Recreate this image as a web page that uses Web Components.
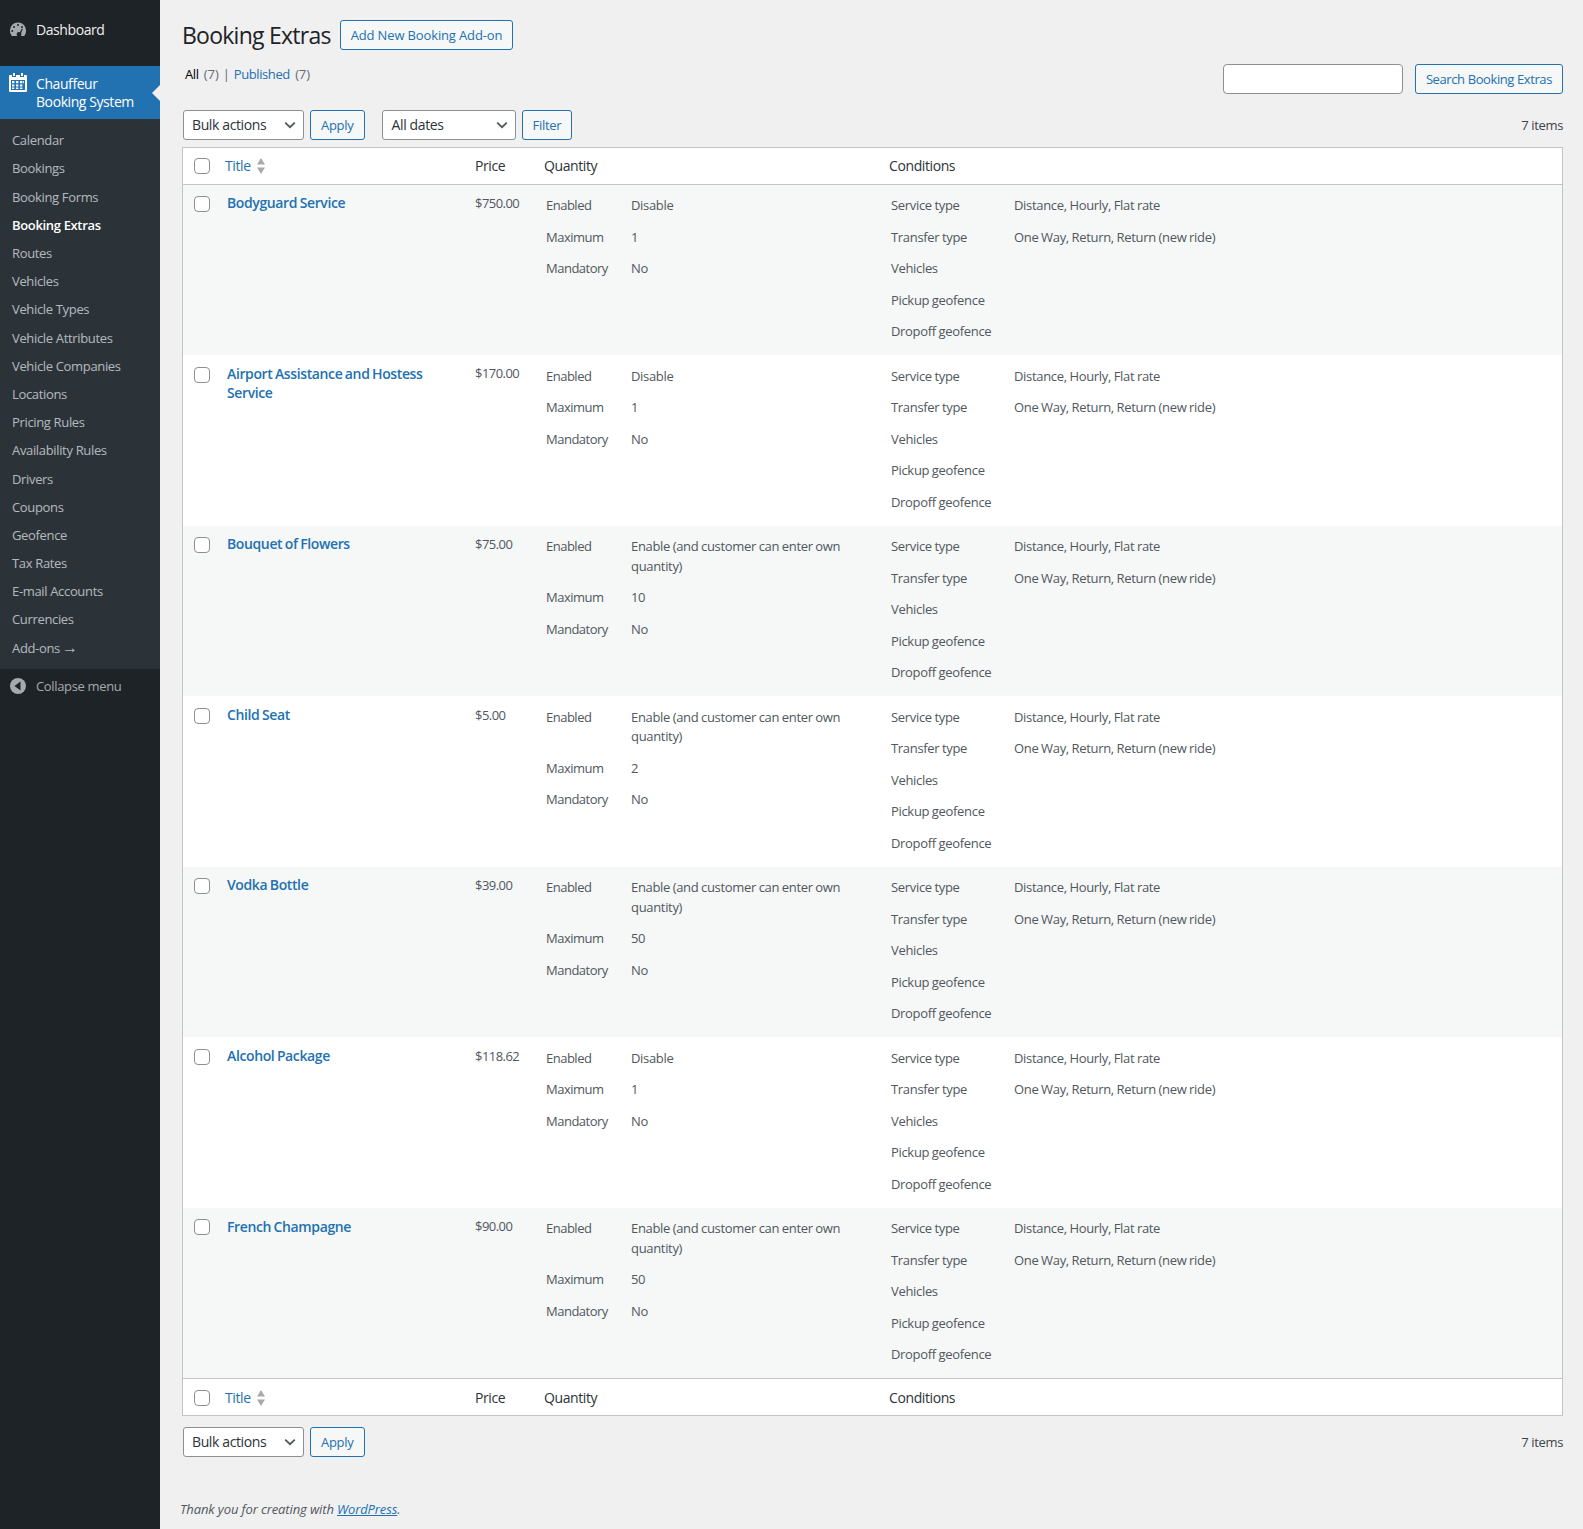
<!DOCTYPE html>
<html lang="en">
<head>
<meta charset="utf-8">
<title>Booking Extras</title>
<style>
  html, body { margin: 0; padding: 0; background: #f0f0f1; }
  body { font: 13px/1.4 "Open Sans", "Noto Sans", sans-serif; color: #3c434a; letter-spacing: -0.32px; word-spacing: -0.4px; }
</style>
</head>
<body>
<wp-admin></wp-admin>
<script>
class WpButton extends HTMLElement {
  connectedCallback() {
    const shadow = this.attachShadow({ mode: 'open' });
    shadow.innerHTML = `
      <style>
        :host { display: inline-flex; align-items: center; height: 30px; box-sizing: border-box;
          padding: 0 10px; border: 1px solid #2271b1; border-radius: 3px; background: #f6f7f7;
          color: #2271b1; font-size: 13px; white-space: nowrap; letter-spacing: var(--btn-spacing, -0.28px); word-spacing: 0; }
      </style>
      <slot></slot>`;
  }
}
customElements.define('wp-button', WpButton);

class WpSelect extends HTMLElement {
  connectedCallback() {
    const shadow = this.attachShadow({ mode: 'open' });
    shadow.innerHTML = `
      <style>
        :host { display: inline-flex; align-items: center; justify-content: space-between; height: 30px;
          box-sizing: border-box; padding: 0 7px 0 8px; border: 1px solid #8c8f94; border-radius: 3px;
          background: #fff; color: #2c3338; font-size: 14px; white-space: nowrap; letter-spacing: -0.38px; word-spacing: 0; }
        svg { display: block; }
      </style>
      <slot></slot>
      <svg width="12" height="12" viewBox="0 0 12 12"><path d="M1.2 3.6 6 8.2l4.8-4.6" fill="none" stroke="#50575e" stroke-width="1.8"/></svg>`;
  }
}
customElements.define('wp-select', WpSelect);

class WpCheck extends HTMLElement {
  connectedCallback() {
    const shadow = this.attachShadow({ mode: 'open' });
    shadow.innerHTML = `
      <style>
        :host { display: block; width: 16px; height: 16px; box-sizing: border-box; flex: none;
          border: 1px solid #8c8f94; border-radius: 4px; background: #fff; }
      </style>`;
  }
}
customElements.define('wp-check', WpCheck);

class WpSidebar extends HTMLElement {
  connectedCallback() {
    const shadow = this.attachShadow({ mode: 'open' });
    // Submenu entries of the plugin
    const items = ['Calendar', 'Bookings', 'Booking Forms', 'Booking Extras', 'Routes', 'Vehicles',
      'Vehicle Types', 'Vehicle Attributes', 'Vehicle Companies', 'Locations', 'Pricing Rules',
      'Availability Rules', 'Drivers', 'Coupons', 'Geofence', 'Tax Rates', 'E-mail Accounts',
      'Currencies', 'Add-ons <span class="arrow">→</span>'];
    const itemHTML = items.map(name =>
      `<a class="${name === 'Booking Extras' ? 'current' : ''}">${name}</a>`
    ).join('');
    shadow.innerHTML = `
      <style>
        :host { display: block; width: 160px; flex: none; background: #1d2327; font-size: 14px; letter-spacing: -0.42px; word-spacing: 0; }
        .top { display: flex; align-items: center; box-sizing: border-box; height: 34px; padding-top: 2px; margin: 12px 0 20px; color: #f0f0f1; }
        .ico { width: 36px; flex: none; display: flex; justify-content: center; }
        .ico svg { display: block; margin-left: -1px; }
        .active { position: relative; display: flex; box-sizing: border-box; height: 53px; background: #2271b1; color: #fff; padding: 9px 0 0; line-height: 18.2px; }
        .active .ico { align-items: flex-start; }
        .active::after { content: ""; position: absolute; right: 0; top: 50%; margin-top: -8px;
          border: 8px solid transparent; border-right-color: #f0f0f1; border-left-width: 0; }
        .sub { background: #2c3338; padding: 7.3px 0 6.7px; font-size: 13px; letter-spacing: -0.34px; }
        .sub a { display: block; height: 18.2px; padding: 5px 12px; line-height: 18.2px; color: rgba(240,246,252,.7); }
        .sub a.current { color: #fff; font-weight: 600; }
        .arrow { font-family: "Liberation Sans", sans-serif; font-size: 16px; line-height: 0; letter-spacing: 0; margin-left: -1px; }
        .collapse { display: flex; align-items: center; box-sizing: border-box; height: 34px; padding-top: 1px; color: #a7aaad; font-size: 13px; letter-spacing: -0.34px; }
      </style>
      <div class="top">
        <span class="ico"><svg width="20" height="20" viewBox="0 0 20 20"><path fill="#a7aaad" fill-rule="evenodd" d="M3.76 16A8.5 8.5 0 0 1 1.9 10.5a8.1 8.1 0 0 1 16.2 0c0 2.1-.7 4-1.86 5.5H12.7c.5-.4.8-1 .8-1.7 0-.5-.2-1-.4-1.4l1.7-4-1-.4-1.8 3.8a2.3 2.3 0 0 0-3.4 2c0 .7.3 1.3.8 1.7zM10 4a1 1 0 1 0 0 2 1 1 0 0 0 0-2zM6 6a1 1 0 1 0 0 2 1 1 0 0 0 0-2zM4.2 10a1 1 0 1 0 0 2 1 1 0 0 0 0-2zM14 6a1 1 0 1 0 0 2 1 1 0 0 0 0-2z"/></svg></span>
        Dashboard
      </div>
      <div class="active">
        <span class="ico"><svg width="18" height="20" viewBox="0 0 18 20" style="margin-top:-2px"><path fill="#fff" fill-rule="evenodd" d="M4 0h2v3H4zM12 0h2v3h-2zM1 2h2v2h4V2h4v2h4V2h2a1 1 0 0 1 1 1v15a1 1 0 0 1-1 1H1a1 1 0 0 1-1-1V3a1 1 0 0 1 1-1zm1 5v10h14V7zm1 1h2.4v2.2H3zm4 0h2.4v2.2H7zm4 0h2.4v2.2H11zm3.2 0H15v2.2h-.8zM3 11.4h2.4v2.2H3zm4 0h2.4v2.2H7zm4 0h2.4v2.2H11zM3 14.6h2.4V16H3zm4 0h2.4V16H7zm4 0h2.4V16H11z"/></svg></span>
        <span>Chauffeur<br>Booking System</span>
      </div>
      <div class="sub">${itemHTML}</div>
      <div class="collapse">
        <span class="ico"><svg width="16" height="16" viewBox="0 0 16 16"><circle cx="8" cy="8" r="8" fill="#a7aaad"/><path d="M10.5 3.5v9L4.5 8z" fill="#1d2327"/></svg></span>
        Collapse menu
      </div>`;
  }
}
customElements.define('wp-sidebar', WpSidebar);

class ListHead extends HTMLElement {
  connectedCallback() {
    const shadow = this.attachShadow({ mode: 'open' });
    shadow.innerHTML = `
      <style>
        :host { display: grid; grid-template-columns: 282px 69px 345px 1fr; align-items: center;
          box-sizing: border-box; background: #fff; font-size: 14px; color: #2c3338; letter-spacing: -0.4px; }
        .first { display: flex; align-items: center; padding-left: 11px; }
        .title { display: flex; align-items: center; margin-left: 15px; color: #2271b1; }
        .title svg { margin-left: 5px; display: block; }
        .col { padding-left: 10px; }
      </style>
      <div class="first"><wp-check></wp-check><span class="title">Title
        <svg width="10" height="18" viewBox="0 0 10 18"><path d="M5 1 9 7.5H1zM1 10.5h8L5 17z" fill="#a7aaad"/></svg></span></div>
      <div class="col">Price</div>
      <div class="col">Quantity</div>
      <div class="col">Conditions</div>`;
  }
}
customElements.define('list-head', ListHead);

class InfoGrid extends HTMLElement {
  connectedCallback() {
    const shadow = this.attachShadow({ mode: 'open' });
    const pairs = JSON.parse(this.getAttribute('pairs'));
    shadow.innerHTML = `
      <style>
        :host { display: grid; grid-template-columns: var(--label) 1fr; line-height: 19.5px; color: #50575e; }
        div { padding: 6px 0; min-height: 19.5px; }
        .key { letter-spacing: var(--key-spacing, inherit); }
      </style>
      ${pairs.map(([k, v]) => `<div class="key">${k}</div><div>${v}</div>`).join('')}`;
  }
}
customElements.define('info-grid', InfoGrid);

class ExtraRow extends HTMLElement {
  connectedCallback() {
    const shadow = this.attachShadow({ mode: 'open' });
    const own = this.hasAttribute('own');
    const pairs = [
      ['Enabled', own ? 'Enable (and customer can enter own quantity)' : 'Disable'],
      ['Maximum', this.getAttribute('max')],
      ['Mandatory', 'No']
    ];
    const cond = [
      ['Service type', 'Distance, Hourly, Flat rate'],
      ['Transfer type', 'One Way, Return, Return (new ride)'],
      ['Vehicles', ''],
      ['Pickup geofence', ''],
      ['Dropoff geofence', '']
    ];
    shadow.innerHTML = `
      <style>
        :host { display: grid; grid-template-columns: 282px 69px 345px 1fr; height: 170.55px; box-sizing: border-box;
          background: #fff; color: #50575e; }
        :host([alt]) { background: #f6f7f7; }
        .first { display: flex; align-items: flex-start; padding: 11.4px 10px 0 11px; }
        .name { margin-left: 17px; font-size: 14px; font-weight: 600; line-height: 19.5px; color: #2271b1; margin-top: -2.7px;
          letter-spacing: -0.38px; word-spacing: -0.7px; }
        .price { padding: 9.3px 0 0 10px; line-height: 19.5px; letter-spacing: -0.55px; }
        .info { padding: 5.5px 10px 0 12px; }
        .qty { --label: 85px; --key-spacing: -0.5px; }
        .cond { --label: 123px; }
      </style>
      <div class="first"><wp-check></wp-check><span class="name">${this.getAttribute('name')}</span></div>
      <div class="price">${this.getAttribute('price')}</div>
      <div class="info qty"><info-grid pairs='${JSON.stringify(pairs)}'></info-grid></div>
      <div class="info cond"><info-grid pairs='${JSON.stringify(cond)}'></info-grid></div>`;
  }
}
customElements.define('extra-row', ExtraRow);

class TableNav extends HTMLElement {
  connectedCallback() {
    const shadow = this.attachShadow({ mode: 'open' });
    shadow.innerHTML = `
      <style>
        :host { display: flex; align-items: center; height: 30px; gap: 6px; padding-left: 1px; }
        .count { margin-left: auto; font-size: 13px; color: #3c434a; letter-spacing: -0.35px; word-spacing: 0; }
        :host([top]) .count { margin-top: 1px; }
        .sel-bulk { width: 121px; }
        ::slotted(*) { flex: none; }
      </style>
      <wp-select class="sel-bulk">Bulk actions</wp-select>
      <wp-button>Apply</wp-button>
      <slot></slot>
      <span class="count">7 items</span>`;
  }
}
customElements.define('table-nav', TableNav);

class WpAdmin extends HTMLElement {
  connectedCallback() {
    const shadow = this.attachShadow({ mode: 'open' });
    // Rows of the list table
    const rows = [
      { name: 'Bodyguard Service', price: '$750.00', max: 1 },
      { name: 'Airport Assistance and Hostess Service', price: '$170.00', max: 1 },
      { name: 'Bouquet of Flowers', price: '$75.00', max: 10, own: true },
      { name: 'Child Seat', price: '$5.00', max: 2, own: true },
      { name: 'Vodka Bottle', price: '$39.00', max: 50, own: true },
      { name: 'Alcohol Package', price: '$118.62', max: 1 },
      { name: 'French Champagne', price: '$90.00', max: 50, own: true }
    ];
    const rowHTML = rows.map((r, i) =>
      `<extra-row name="${r.name}" price="${r.price}" max="${r.max}"${r.own ? ' own' : ''}${i % 2 === 0 ? ' alt' : ''}></extra-row>`
    ).join('');
    shadow.innerHTML = `
      <style>
        :host { display: flex; min-height: 1529px; width: 100%; }
        main { flex: 1; min-width: 0; padding: 20px 20px 0 22px; box-sizing: border-box; }
        .head { display: flex; align-items: center; height: 30px; gap: 9px; margin-bottom: 14px; }
        .head wp-button { --btn-spacing: -0.14px; }
        h1 { margin: 0; font-size: 23px; font-weight: 400; line-height: 30px; color: #1d2327; letter-spacing: -0.75px; word-spacing: 0; }
        .sub { display: flex; justify-content: space-between; height: 30px; margin-bottom: 16px; }
        .views { display: flex; gap: 4px; margin-left: 3px; line-height: 20px; font-size: 13px; color: #646970; letter-spacing: -0.1px; word-spacing: 2px; }
        .views b { font-weight: 400; color: #000; letter-spacing: -0.4px; }
        .views a { color: #2271b1; letter-spacing: -0.4px; }
        .views i { font-style: normal; color: #646970; }
        .search { display: flex; gap: 12px; --btn-spacing: -0.4px; }
        .input { width: 180px; height: 30px; box-sizing: border-box; border: 1px solid #8c8f94; border-radius: 4px; background: #fff; }
        .table { margin: 7px 0 11px; border: 1px solid #c3c4c7; }
        list-head.top { height: 36.6px; border-bottom: 1px solid #c3c4c7; }
        list-head.bottom { height: 36.4px; padding-top: 1px; border-top: 1px solid #c3c4c7; }
        .date { width: 134px; margin-left: 11px; padding-left: 9px; }
        footer { margin: 43px 0 0 -2px; font-size: 13px; font-style: italic; color: #50575e; letter-spacing: -0.12px; word-spacing: 0; }
        footer a { color: #2271b1; text-decoration: underline; }
      </style>
      <wp-sidebar></wp-sidebar>
      <main>
        <div class="head"><h1>Booking Extras</h1><wp-button>Add New Booking Add-on</wp-button></div>
        <div class="sub">
          <div class="views"><span><b>All</b> (7)</span><i>|</i><span><a>Published</a> (7)</span></div>
          <div class="search"><div class="input"></div><wp-button>Search Booking Extras</wp-button></div>
        </div>
        <table-nav top><wp-select class="date">All dates</wp-select><wp-button>Filter</wp-button></table-nav>
        <div class="table">
          <list-head class="top"></list-head>
          ${rowHTML}
          <list-head class="bottom"></list-head>
        </div>
        <table-nav></table-nav>
        <footer>Thank you for creating with <a>WordPress</a>.</footer>
      </main>`;
  }
}
customElements.define('wp-admin', WpAdmin);
</script>
</body>
</html>
